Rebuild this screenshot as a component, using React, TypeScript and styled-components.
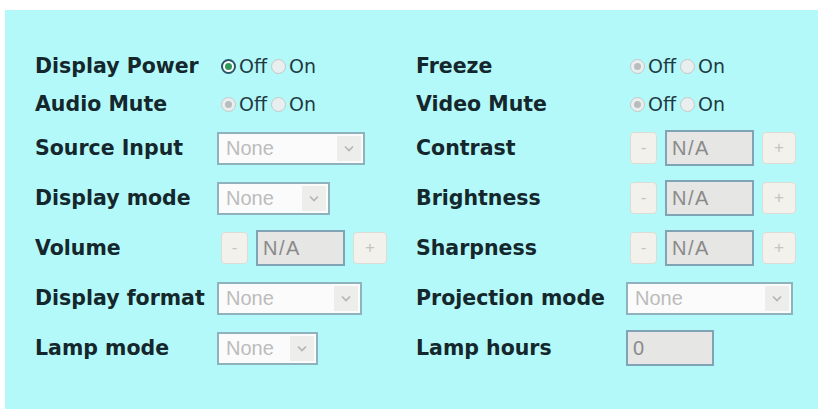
import React from 'react';
import styled, { createGlobalStyle } from 'styled-components';

const GlobalStyle = createGlobalStyle`
  html, body {
    margin: 0;
    padding: 0;
    background: #ffffff;
    overflow: hidden;
  }
`;

const Page = styled.div`
  width: 826px;
  height: 409px;
  padding: 10px 8px 0 5px;
  box-sizing: border-box;
  display: flex;
`;

const Panel = styled.div`
  flex: 1;
  background: #b4f9f9;
  padding: 37px 0 0 30px;
  box-sizing: border-box;
  display: grid;
  grid-template-columns: 182px 199px 210px auto;
  grid-template-rows: 38px 38px 50px 50px 50px 50px 50px;
  align-items: center;
  align-content: start;
`;

const Label = styled.div`
  font-family: 'DejaVu Sans', Verdana, sans-serif;
  font-weight: bold;
  font-size: 20.5px;
  color: #14272c;
  white-space: nowrap;
`;

const Cell = styled.div`
  display: flex;
  align-items: center;
`;

const RadioGroup = styled.div`
  display: flex;
  align-items: center;
  padding-left: 4px;
  font-family: 'DejaVu Sans', Verdana, sans-serif;
  font-size: 19px;
  color: #1f3a42;
`;

const Dot = styled.span<{ $checked?: boolean; $active?: boolean }>`
  width: 15px;
  height: 15px;
  border-radius: 50%;
  box-sizing: border-box;
  margin-right: 3px;
  display: inline-flex;
  align-items: center;
  justify-content: center;
  border: ${({ $active }) => ($active ? '2px solid #2a5568' : '1.5px solid #c4c8c8')};
  background: ${({ $active }) => ($active ? '#ffffff' : '#e9eeee')};

  &::after {
    content: '';
    display: ${({ $checked }) => ($checked ? 'block' : 'none')};
    width: 7px;
    height: 7px;
    border-radius: 50%;
    background: ${({ $active }) => ($active ? '#2f9a58' : '#b9bdbd')};
  }
`;

const RadioText = styled.span`
  margin-right: 4px;
`;

const Select = styled.div<{ $width: number }>`
  width: ${({ $width }) => $width}px;
  height: 33px;
  box-sizing: border-box;
  border: 2px solid #8fb2bd;
  background: #fbfbfb;
  display: flex;
  align-items: stretch;
  font-family: 'Liberation Sans', Arial, sans-serif;
  font-size: 20px;
  color: #bcbcbc;
`;

const SelectText = styled.span`
  flex: 1;
  display: flex;
  align-items: center;
  padding-left: 7px;
`;

const Arrow = styled.span`
  width: 24px;
  margin: 2px;
  background: #ededeb;
  display: flex;
  align-items: center;
  justify-content: center;
`;

const Stepper = styled.div`
  display: flex;
  align-items: center;
  gap: 8px;
  padding-left: 4px;
`;

const StepButton = styled.span<{ $wide?: boolean }>`
  width: ${({ $wide }) => ($wide ? 34 : 27)}px;
  height: 32px;
  box-sizing: border-box;
  border: 1px solid #dcdcd6;
  border-radius: 4px;
  background: #f3f1ec;
  color: #c4c4c0;
  font-family: 'Liberation Sans', Arial, sans-serif;
  font-size: 17px;
  display: flex;
  align-items: center;
  justify-content: center;
`;

const Field = styled.div<{ $width: number }>`
  width: ${({ $width }) => $width}px;
  height: 36px;
  box-sizing: border-box;
  border: 2px solid #80a4b5;
  background: #e6e6e4;
  color: #8a8a8a;
  font-family: 'Liberation Sans', Arial, sans-serif;
  font-size: 20px;
  display: flex;
  align-items: center;
  padding-left: 5px;
`;

const NumberText = styled.span`
  letter-spacing: 1.5px;
`;

const Chevron = () => (
  <svg width="10" height="7" viewBox="0 0 10 7">
    <path d="M1 1.5 L5 5.5 L9 1.5" fill="none" stroke="#b4b4b4" strokeWidth="1.6" />
  </svg>
);

const OnOff = ({ active }: { active?: boolean }) => (
  <RadioGroup>
    <Dot $checked $active={active} />
    <RadioText>Off</RadioText>
    <Dot />
    <RadioText>On</RadioText>
  </RadioGroup>
);

const Dropdown = ({ width }: { width: number }) => (
  <Select $width={width}>
    <SelectText>None</SelectText>
    <Arrow>
      <Chevron />
    </Arrow>
  </Select>
);

const Level = () => (
  <Stepper>
    <StepButton>-</StepButton>
    <Field $width={89}>
      <NumberText>N/A</NumberText>
    </Field>
    <StepButton $wide>+</StepButton>
  </Stepper>
);

const App = () => (
  <Page>
    <GlobalStyle />
    <Panel>
      <Label>Display Power</Label>
      <Cell>
        <OnOff active />
      </Cell>
      <Label>Freeze</Label>
      <Cell>
        <OnOff />
      </Cell>

      <Label>Audio Mute</Label>
      <Cell>
        <OnOff />
      </Cell>
      <Label>Video Mute</Label>
      <Cell>
        <OnOff />
      </Cell>

      <Label>Source Input</Label>
      <Cell>
        <Dropdown width={148} />
      </Cell>
      <Label>Contrast</Label>
      <Cell>
        <Level />
      </Cell>

      <Label>Display mode</Label>
      <Cell>
        <Dropdown width={113} />
      </Cell>
      <Label>Brightness</Label>
      <Cell>
        <Level />
      </Cell>

      <Label>Volume</Label>
      <Cell>
        <Level />
      </Cell>
      <Label>Sharpness</Label>
      <Cell>
        <Level />
      </Cell>

      <Label>Display format</Label>
      <Cell>
        <Dropdown width={145} />
      </Cell>
      <Label>Projection mode</Label>
      <Cell>
        <Dropdown width={167} />
      </Cell>

      <Label>Lamp mode</Label>
      <Cell>
        <Dropdown width={101} />
      </Cell>
      <Label>Lamp hours</Label>
      <Cell>
        <Field $width={88}>0</Field>
      </Cell>
    </Panel>
  </Page>
);

export default App;
